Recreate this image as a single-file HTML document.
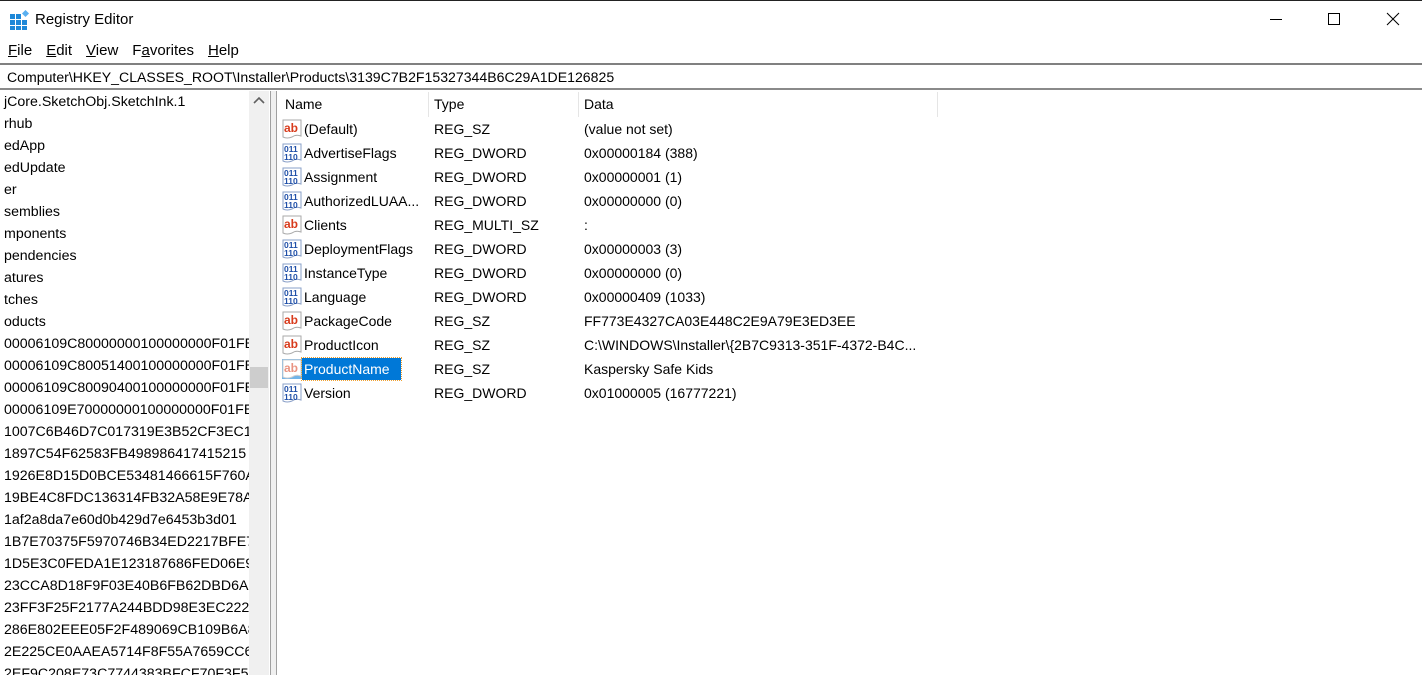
<!DOCTYPE html>
<html><head><style>
*{margin:0;padding:0;box-sizing:border-box}
body{width:1422px;height:675px;overflow:hidden;background:#fff;font-family:"Liberation Sans",sans-serif;font-size:14px;color:#000;position:relative}
.abs{position:absolute}
.title{left:0;top:0;width:1422px;height:38px;border-top:1px solid #222;background:#fff}
.menu span{margin-right:14px}
.menu u{text-decoration:underline}
.addr{left:0;top:63px;width:1422px;height:27px;border-top:2px solid #808080;border-bottom:2px solid #8a8a8a;padding:4px 0 0 7px;font-size:14.1px}
.tree{left:0;top:91px;width:249px;height:584px;overflow:hidden;white-space:nowrap;font-size:14.2px}
.tree div{height:22px;line-height:22px;padding-left:4px}
.sb{left:249px;top:91px;width:20px;height:584px;background:#f0f0f0}
.thumb{left:250px;top:367px;width:18px;height:21px;background:#cdcdcd}
.split{left:270px;top:91px;width:7px;height:584px;background:#f0f0f0;border-left:1px solid #a0a0a0;border-right:1px solid #a0a0a0}
.hdr{top:92px;height:24px;line-height:24px;color:#000}
.sep{top:92px;width:1px;height:25px;background:#e5e5e5}
.row{left:282px;height:24px;line-height:24px;width:700px;white-space:nowrap}
.row .ic{position:absolute;left:0;top:2px;width:20px;height:20px}
.row .n{position:absolute;left:22px}
.row .t{position:absolute;left:152px}
.row .d{position:absolute;left:302px}
</style></head><body>
<div class="abs title"></div>
<svg class="abs" style="left:10px;top:10px" width="20" height="20" viewBox="0 0 20 20">
<g fill="#1e88d8"><rect x="0" y="4" width="5" height="5"/><rect x="6" y="4" width="5" height="5"/><rect x="0" y="10" width="5" height="5"/><rect x="6" y="10" width="5" height="5"/><rect x="12" y="10" width="5" height="5"/><rect x="0" y="16" width="5" height="4"/><rect x="6" y="16" width="5" height="4"/><rect x="12" y="16" width="5" height="4"/></g>
<rect x="13" y="1" width="5" height="5" fill="#5ab0f0" transform="rotate(45 15.5 3.5)"/></svg>
<div class="abs" style="left:35px;top:11px;font-size:15px">Registry Editor</div>
<svg class="abs" style="left:1266px;top:12px" width="140" height="16">
<line x1="4" y1="7.5" x2="16" y2="7.5" stroke="#000"/>
<rect x="62.5" y="1.5" width="11" height="11" fill="none" stroke="#000"/>
<path d="M121 1L133 13M133 1L121 13" stroke="#000"/></svg>
<div class="abs menu" style="left:8px;top:42px;font-size:15px"><span><u>F</u>ile</span><span><u>E</u>dit</span><span><u>V</u>iew</span><span>F<u>a</u>vorites</span><span><u>H</u>elp</span></div>
<div class="abs addr">Computer\HKEY_CLASSES_ROOT\Installer\Products\3139C7B2F15327344B6C29A1DE126825</div>
<div class="abs tree">
<div>jCore.SketchObj.SketchInk.1</div><div>rhub</div><div>edApp</div><div>edUpdate</div><div>er</div><div>semblies</div><div>mponents</div><div>pendencies</div><div>atures</div><div>tches</div><div>oducts</div>
<div>00006109C80000000100000000F01FEC</div><div>00006109C80051400100000000F01FEC</div><div>00006109C80090400100000000F01FEC</div><div>00006109E70000000100000000F01FEC</div><div>1007C6B46D7C017319E3B52CF3EC19</div><div>1897C54F62583FB498986417415215</div><div>1926E8D15D0BCE53481466615F760A</div><div>19BE4C8FDC136314FB32A58E9E78A7</div><div>1af2a8da7e60d0b429d7e6453b3d01</div><div>1B7E70375F5970746B34ED2217BFE7</div><div>1D5E3C0FEDA1E123187686FED06E9</div><div>23CCA8D18F9F03E40B6FB62DBD6A2</div><div>23FF3F25F2177A244BDD98E3EC2224</div><div>286E802EEE05F2F489069CB109B6A8</div><div>2E225CE0AAEA5714F8F55A7659CC6C</div><div>2EF9C208E73C7744383BFCF70F3F53</div>
</div>
<div class="abs sb"></div>
<svg class="abs" style="left:252px;top:96px" width="14" height="10"><path d="M2 7L7 2L12 7" fill="none" stroke="#606060" stroke-width="1.6"/></svg>
<div class="abs thumb"></div>
<div class="abs split"></div>
<div class="abs hdr" style="left:285px">Name</div>
<div class="abs hdr" style="left:434px">Type</div>
<div class="abs hdr" style="left:584px">Data</div>
<div class="abs sep" style="left:428px"></div>
<div class="abs sep" style="left:578px"></div>
<div class="abs sep" style="left:937px"></div>
<svg width="0" height="0" style="position:absolute"><defs>
<symbol id="ab" viewBox="0 0 20 20"><path d="M1 1H19V17Q14 15 10 18Q5 20 1 18Z" fill="#fff" stroke="#aaa"/><text x="2" y="13" font-family="Liberation Sans" font-weight="bold" font-size="12" fill="#d83b1c">ab</text></symbol>
<symbol id="bin" viewBox="0 0 20 20"><path d="M1 1H19V17Q14 15 10 18Q5 20 1 18Z" fill="#fff" stroke="#8aa0c8"/><text x="2" y="9" font-family="Liberation Sans" font-weight="bold" font-size="8.5" fill="#1f4fa8">011</text><text x="2" y="17" font-family="Liberation Sans" font-weight="bold" font-size="8.5" fill="#1f4fa8">110</text></symbol>
</defs></svg>
<div class="abs row" style="top:117px"><svg class="ic"><use href="#ab"/></svg><span class="n">(Default)</span><span class="t">REG_SZ</span><span class="d">(value not set)</span></div>
<div class="abs row" style="top:141px"><svg class="ic"><use href="#bin"/></svg><span class="n">AdvertiseFlags</span><span class="t">REG_DWORD</span><span class="d">0x00000184 (388)</span></div>
<div class="abs row" style="top:165px"><svg class="ic"><use href="#bin"/></svg><span class="n">Assignment</span><span class="t">REG_DWORD</span><span class="d">0x00000001 (1)</span></div>
<div class="abs row" style="top:189px"><svg class="ic"><use href="#bin"/></svg><span class="n">AuthorizedLUAA...</span><span class="t">REG_DWORD</span><span class="d">0x00000000 (0)</span></div>
<div class="abs row" style="top:213px"><svg class="ic"><use href="#ab"/></svg><span class="n">Clients</span><span class="t">REG_MULTI_SZ</span><span class="d">:</span></div>
<div class="abs row" style="top:237px"><svg class="ic"><use href="#bin"/></svg><span class="n">DeploymentFlags</span><span class="t">REG_DWORD</span><span class="d">0x00000003 (3)</span></div>
<div class="abs row" style="top:261px"><svg class="ic"><use href="#bin"/></svg><span class="n">InstanceType</span><span class="t">REG_DWORD</span><span class="d">0x00000000 (0)</span></div>
<div class="abs row" style="top:285px"><svg class="ic"><use href="#bin"/></svg><span class="n">Language</span><span class="t">REG_DWORD</span><span class="d">0x00000409 (1033)</span></div>
<div class="abs row" style="top:309px"><svg class="ic"><use href="#ab"/></svg><span class="n">PackageCode</span><span class="t">REG_SZ</span><span class="d">FF773E4327CA03E448C2E9A79E3ED3EE</span></div>
<div class="abs row" style="top:333px"><svg class="ic"><use href="#ab"/></svg><span class="n">ProductIcon</span><span class="t">REG_SZ</span><span class="d">C:\WINDOWS\Installer\{2B7C9313-351F-4372-B4C...</span></div>
<div class="abs row" style="top:357px"><svg class="ic" style="opacity:.55;background:#0078d7"><use href="#ab"/></svg><span class="n" style="left:20px;top:1px;height:22px;line-height:22px;width:99px;background:#0078d7;color:#fff;padding:0 0 0 2px;outline:1px dotted #f0a030">ProductName</span><span class="t">REG_SZ</span><span class="d">Kaspersky Safe Kids</span></div>
<div class="abs row" style="top:381px"><svg class="ic"><use href="#bin"/></svg><span class="n">Version</span><span class="t">REG_DWORD</span><span class="d">0x01000005 (16777221)</span></div>
</body></html>
